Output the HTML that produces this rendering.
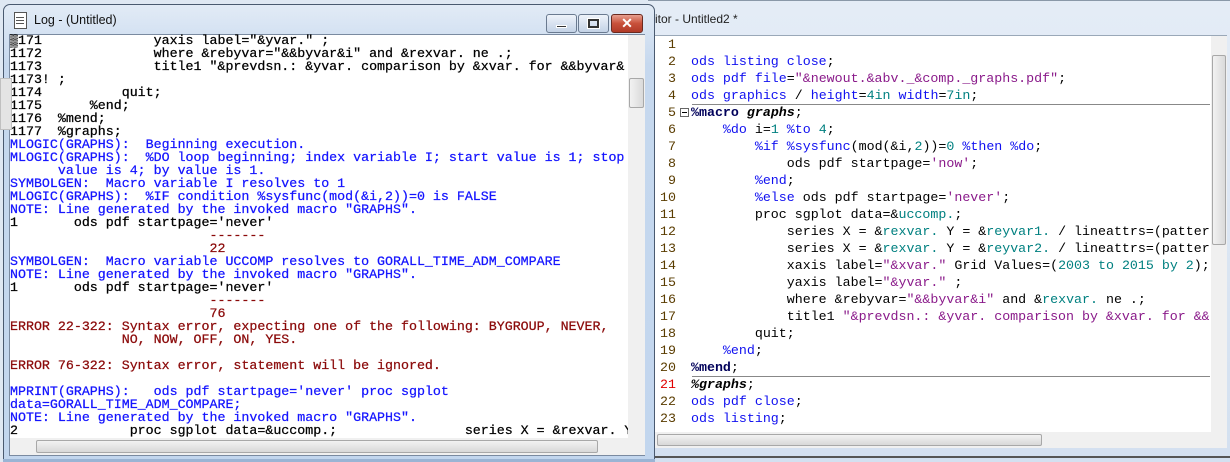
<!DOCTYPE html>
<html><head><meta charset="utf-8"><style>
*{margin:0;padding:0;box-sizing:border-box}
body{width:1230px;height:462px;overflow:hidden;background:#dfe8f3;position:relative;font-family:"Liberation Sans",sans-serif}
.abs{position:absolute}
pre{font-family:"Liberation Mono",monospace;white-space:pre}
.b{color:#1414ff}.r{color:#8b0a0a}.k{color:#000}
.kw{color:#1010f0}.st{color:#8a1a8a}.nu{color:#008080}.mc{color:#00005a;font-weight:bold}
.it{font-style:italic;font-weight:bold;color:#000}
</style></head><body>
<!-- editor window -->
<div class="abs" style="left:648px;top:0;width:582px;height:462px;background:linear-gradient(#e4ecf6,#d3e0f0);border-top:1px solid #8a98a8"></div>
<div class="abs" style="left:655px;top:12px;font-size:12px;color:#222">itor - Untitled2 *</div>
<div class="abs" style="left:655px;top:35px;width:572px;height:397px;background:#fff;border-top:1px solid #9aa8b8"></div>
<div class="abs" style="left:692px;top:104px;width:518px;height:1px;background:#888"></div>
<div class="abs" style="left:692px;top:376px;width:518px;height:1px;background:#888"></div>
<div class="abs" style="left:680px;top:108px;width:9px;height:9px;border:1px solid #666;background:#fff"></div>
<div class="abs" style="left:682px;top:112px;width:5px;height:1px;background:#000"></div>
<pre class="abs" style="left:652px;top:36px;font-size:13.3px;line-height:17px;color:#5a3c00;text-align:right;width:24px">1
2
3
4
5
6
7
8
9
10
11
12
13
14
15
16
17
18
19
20
<span style="color:#e00000">21</span>
22
23</pre>
<pre class="abs" style="left:691px;top:36px;font-size:13.3px;line-height:17px;color:#000;width:518px;overflow:hidden">&#8203;
<span class="kw">ods listing close</span>;
<span class="kw">ods pdf file</span>=<span class="st">"&amp;newout.&amp;abv._&amp;comp._graphs.pdf"</span>;
<span class="kw">ods graphics</span> / <span class="kw">height</span>=<span class="nu">4in</span> <span class="kw">width</span>=<span class="nu">7in</span>;
<span class="mc">%macro</span> <span class="it">graphs</span>;
    <span class="kw">%do</span> i=<span class="nu">1</span> <span class="kw">%to</span> <span class="nu">4</span>;
        <span class="kw">%if</span> <span class="kw">%sysfunc</span>(mod(&amp;i,<span class="nu">2</span>))=<span class="nu">0</span> <span class="kw">%then</span> <span class="kw">%do</span>;
            ods pdf startpage=<span class="st">'now'</span>;
        <span class="kw">%end</span>;
        <span class="kw">%else</span> ods pdf startpage=<span class="st">'never'</span>;
        proc sgplot data=&amp;<span class="nu">uccomp.</span>;
            series X = &amp;<span class="nu">rexvar.</span> Y = &amp;<span class="nu">reyvar1.</span> / lineattrs=(patter
            series X = &amp;<span class="nu">rexvar.</span> Y = &amp;<span class="nu">reyvar2.</span> / lineattrs=(patter
            xaxis label=<span class="st">"&amp;xvar."</span> Grid Values=(<span class="nu">2003</span> <span class="nu">to</span> <span class="nu">2015</span> <span class="nu">by</span> <span class="nu">2</span>);
            yaxis label=<span class="st">"&amp;yvar."</span> ;
            where &amp;rebyvar=<span class="st">"&amp;&amp;byvar&amp;i"</span> and &amp;<span class="nu">rexvar.</span> ne .;
            title1 <span class="st">"&amp;prevdsn.: &amp;yvar. comparison by &amp;xvar. for &amp;&amp;</span>
        quit;
    <span class="kw">%end</span>;
<span class="mc">%mend</span>;
<span class="it">%graphs</span>;
<span class="kw">ods pdf close</span>;
<span class="kw">ods listing</span>;</pre>
<div class="abs" style="left:1211px;top:36px;width:16px;height:396px;background:#f0f0f0"></div>
<div class="abs" style="left:1212px;top:55px;width:14px;height:190px;border:1px solid #a8a8a8;border-radius:2px;background:linear-gradient(90deg,#f2f2f2,#dadada)"></div>
<div class="abs" style="left:655px;top:432px;width:572px;height:16px;background:#f0f0f0"></div>
<div class="abs" style="left:657px;top:434px;width:385px;height:12px;border:1px solid #a8a8a8;border-radius:2px;background:linear-gradient(#f2f2f2,#d8d8d8)"></div>
<div class="abs" style="left:648px;top:456px;width:582px;height:2px;background:#555"></div>

<!-- log window -->
<div class="abs" style="left:3px;top:4px;width:652px;height:458px;border:1px solid #4a5a70;border-radius:7px 7px 0 0;background:linear-gradient(#e2ebf6,#c6d8ee 60px,#c2d6ee)"></div>
<div class="abs" style="left:14px;top:12px;width:13px;height:17px;border:1px solid #555;background:#fff"></div>
<div class="abs" style="left:16px;top:17px;width:8px;height:1px;background:#555;box-shadow:0 3px #555,0 6px #555"></div>
<div class="abs" style="left:34px;top:13px;font-size:12.5px;color:#111">Log - (Untitled)</div>
<div class="abs" style="left:546px;top:14px;width:31px;height:19px;border:1px solid #6a7a90;border-radius:3px;background:linear-gradient(#eef3fa,#c3d2e6)"></div>
<div class="abs" style="left:556px;top:25px;width:11px;height:3px;background:#333;border:1px solid #fff"></div>
<div class="abs" style="left:578px;top:14px;width:31px;height:19px;border:1px solid #6a7a90;border-radius:3px;background:linear-gradient(#eef3fa,#c3d2e6)"></div>
<div class="abs" style="left:588px;top:19px;width:11px;height:9px;border:2px solid #333;outline:1px solid #fff"></div>
<div class="abs" style="left:611px;top:14px;width:32px;height:19px;border:1px solid #6a2a20;border-radius:3px;background:linear-gradient(#e8a090,#c8503a 50%,#b03a28);color:#fff;font-weight:bold;font-size:14px;text-align:center;line-height:17px">✕</div>
<div class="abs" style="left:9px;top:34px;width:636px;height:422px;background:#fff;border:1px solid #7a8aa0"></div>
<pre class="abs" style="left:10px;top:34px;font-size:13.3px;line-height:13px;width:618px;overflow:hidden;color:#000;-webkit-text-stroke:0.25px currentColor"><span class="k">▒171              yaxis label="&amp;yvar." ;
1172              where &amp;rebyvar="&amp;&amp;byvar&amp;i" and &amp;rexvar. ne .;
1173              title1 "&amp;prevdsn.: &amp;yvar. comparison by &amp;xvar. for &amp;&amp;byvar&amp;
1173! ;
1174          quit;
1175      %end;
1176  %mend;
1177  %graphs;</span>
<span class="b">MLOGIC(GRAPHS):  Beginning execution.
MLOGIC(GRAPHS):  %DO loop beginning; index variable I; start value is 1; stop
      value is 4; by value is 1.
SYMBOLGEN:  Macro variable I resolves to 1
MLOGIC(GRAPHS):  %IF condition %sysfunc(mod(&amp;i,2))=0 is FALSE
NOTE: Line generated by the invoked macro "GRAPHS".</span>
1       ods pdf startpage='never'
<span class="r">                         -------
                         22</span>
<span class="b">SYMBOLGEN:  Macro variable UCCOMP resolves to GORALL_TIME_ADM_COMPARE
NOTE: Line generated by the invoked macro "GRAPHS".</span>
1       ods pdf startpage='never'
<span class="r">                         -------
                         76
ERROR 22-322: Syntax error, expecting one of the following: BYGROUP, NEVER,
              NO, NOW, OFF, ON, YES.

ERROR 76-322: Syntax error, statement will be ignored.</span>

<span class="b">MPRINT(GRAPHS):   ods pdf startpage='never' proc sgplot
data=GORALL_TIME_ADM_COMPARE;
NOTE: Line generated by the invoked macro "GRAPHS".</span>
2              proc sgplot data=&amp;uccomp.;                series X = &amp;rexvar. Y =</pre>
<div class="abs" style="left:628px;top:35px;width:17px;height:403px;background:#f0f0f0"></div>
<div class="abs" style="left:629px;top:78px;width:15px;height:30px;border:1px solid #a8a8a8;border-radius:2px;background:linear-gradient(90deg,#f2f2f2,#dadada)"></div>
<div class="abs" style="left:10px;top:438px;width:635px;height:17px;background:#f0f0f0"></div>
<div class="abs" style="left:36px;top:440px;width:562px;height:13px;border:1px solid #a8a8a8;border-radius:2px;background:linear-gradient(#f2f2f2,#d8d8d8)"></div>
<div class="abs" style="left:3px;top:459px;width:652px;height:3px;background:#9ab4d4"></div>
<div class="abs" style="left:0;top:78px;width:12px;height:52px;background:#e4e4e4;border:1px solid #c0c0c0"></div>
</body></html>
